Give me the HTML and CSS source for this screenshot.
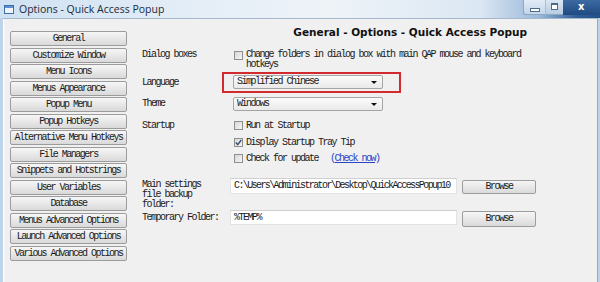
FILE: index.html
```html
<!DOCTYPE html>
<html lang="en">
<head>
  <meta charset="UTF-8">
  <title>Options - Quick Access Popup</title>
  <link rel="stylesheet" href="styles.css">
</head>
<body>
  <div class="window">
    <div class="titlebar">
      <svg class="app-icon" width="10" height="9" viewBox="0 0 10 9">
        <rect x="0.5" y="0.5" width="9" height="8" fill="#eef4fb" stroke="#3d6fa8"/>
        <rect x="1" y="1" width="8" height="2" fill="#5b8fd0"/>
      </svg>
      <span class="title">Options - Quick Access Popup</span>
      <div class="controls">
        <div class="ctl ctl-min"><span class="min-glyph"></span></div>
        <div class="ctl ctl-max"><span class="max-glyph"></span></div>
        <div class="ctl ctl-close">x</div>
      </div>
    </div>

    <div class="client">
      <div class="nav">
        <button class="nav-btn">General</button>
        <button class="nav-btn">Customize Window</button>
        <button class="nav-btn">Menu Icons</button>
        <button class="nav-btn">Menus Appearance</button>
        <button class="nav-btn">Popup Menu</button>
        <button class="nav-btn">Popup Hotkeys</button>
        <button class="nav-btn">Alternative Menu Hotkeys</button>
        <button class="nav-btn">File Managers</button>
        <button class="nav-btn">Snippets and Hotstrings</button>
        <button class="nav-btn">User Variables</button>
        <button class="nav-btn">Database</button>
        <button class="nav-btn">Menus Advanced Options</button>
        <button class="nav-btn">Launch Advanced Options</button>
        <button class="nav-btn">Various Advanced Options</button>
      </div>

      <div class="panel">
        <h1 class="heading">General - Options - Quick Access Popup</h1>

        <div class="row row-dialog">
          <div class="label">Dialog boxes</div>
          <div class="check">
            <span class="box"></span>
            <span class="check-text">Change folders in dialog box with main QAP mouse and keyboard<br>hotkeys</span>
          </div>
        </div>

        <div class="row row-language">
          <div class="label">Language</div>
          <div class="highlight">
            <div class="select"><span>Simplified Chinese</span><span class="arrow"></span></div>
          </div>
        </div>

        <div class="row row-theme">
          <div class="label">Theme</div>
          <div class="select"><span>Windows</span><span class="arrow"></span></div>
        </div>

        <div class="row row-startup">
          <div class="label">Startup</div>
          <div class="checks">
            <div class="check"><span class="box"></span><span class="check-text">Run at Startup</span></div>
            <div class="check">
              <span class="box box-checked">
                <svg width="7" height="7" viewBox="0 0 7 7"><path d="M0.8 3.6 L2.7 5.6 L6.3 1" fill="none" stroke="#3b4f73" stroke-width="1.4"/></svg>
              </span>
              <span class="check-text">Display Startup Tray Tip</span>
            </div>
            <div class="check">
              <span class="box"></span>
              <span class="check-text">Check for update</span>
              <span class="link">(<u>Check now</u>)</span>
            </div>
          </div>
        </div>

        <div class="row row-backup">
          <div class="label label-multi">Main settings<br>file backup<br>folder:</div>
          <div class="field field-backup">C:\Users\Administrator\Desktop\QuickAccessPopup10</div>
          <button class="browse browse-backup">Browse</button>
        </div>

        <div class="row row-temp">
          <div class="label label-temp">Temporary Folder:</div>
          <div class="field field-temp">%TEMP%</div>
          <button class="browse browse-temp">Browse</button>
        </div>
      </div>
    </div>
  </div>
</body>
</html>
```

FILE: styles.css
```css
body {
  margin: 0;
  width: 600px;
  height: 282px;
  overflow: hidden;
  font-family: "Liberation Mono", monospace;
  font-size: 10px;
  letter-spacing: -1.5px;
  color: #1a1a1a;
}

.window {
  height: 282px;
  display: flex;
  flex-direction: column;
  background-color: #bcd3ea;
}

/* title bar */
.titlebar {
  height: 18px;
  flex: none;
  display: flex;
  align-items: center;
  background: linear-gradient(to right, #cfe1f2 0%, #e3edf7 30%, #eef3f8 55%, #dbe7f3 80%, #9ab8d9 90%, #2f5e98 96%, #244f86 100%);
}

.app-icon {
  margin-left: 4px;
  flex: none;
}

.title {
  margin-left: 5px;
  font-family: "Open Sans", sans-serif;
  font-size: 10.5px;
  letter-spacing: 0;
  color: #1c2a3a;
}

.controls {
  margin-left: auto;
  display: flex;
  align-self: flex-start;
  height: 15px;
}

.ctl {
  height: 15px;
  display: flex;
  align-items: center;
  justify-content: center;
  box-sizing: border-box;
}

.ctl-min {
  width: 23px;
  border: 1px solid #8ea7c3;
  border-top: none;
  border-right-color: #a9bdd3;
  border-bottom-left-radius: 3px;
  background: linear-gradient(#e2ecf6, #c3d6ea);
}

.ctl-max {
  width: 17px;
  border-bottom: 1px solid #8ea7c3;
  background: linear-gradient(#dbe7f3, #b7cde4);
}

.ctl-close {
  width: 37px;
  background: linear-gradient(#3d6aa3, #1f4a82);
  color: #ffffff;
  font-family: "DejaVu Sans", sans-serif;
  font-weight: bold;
  font-size: 10px;
  letter-spacing: 0;
  justify-content: flex-start;
  padding-left: 15px;
  padding-bottom: 2px;
}

.min-glyph {
  width: 8px;
  height: 2px;
  margin-top: 6px;
  border: 1px solid #4f6a8b;
  background: #ffffff;
}

.max-glyph {
  width: 5px;
  height: 4px;
  margin-bottom: 2px;
  border: 1px solid #4f6a8b;
  border-top-width: 2px;
  background: #ffffff;
}

/* client area */
.client {
  flex: 1;
  display: flex;
  margin-left: 3px;
  margin-right: 2px;
  background-color: #f0f0f0;
  border-top: 1px solid #a6b8cc;
  border-right: 1px solid #9ea8b3;
  box-shadow: inset 1px 0 0 #ffffff;
}

.nav {
  width: 117px;
  padding: 12px 0 0 7px;
  display: flex;
  flex-direction: column;
  gap: 1.5px;
}

.nav-btn,
.browse {
  height: 15px;
  padding: 0;
  font-family: "Liberation Mono", monospace;
  font-size: 10px;
  letter-spacing: -1.5px;
  color: #1a1a1a;
  border: 1px solid #9c9c9c;
  border-radius: 2px;
  background: linear-gradient(#f6f6f6, #e8e8e8 50%, #d9d9d9);
  line-height: 13px;
  text-align: center;
}

.panel {
  flex: 1;
  padding: 6px 0 0 15px;
}

.heading {
  margin: 0;
  height: 14px;
  line-height: 14px;
  font-family: "DejaVu Sans", sans-serif;
  font-size: 10.5px;
  font-weight: bold;
  letter-spacing: 0;
  color: #111111;
  text-align: right;
  padding-right: 70px;
}

.row {
  display: flex;
  align-items: center;
}

.label {
  width: 91px;
  flex: none;
  line-height: 10px;
}

.row-dialog {
  margin-top: 11px;
  align-items: flex-start;
}

.row-dialog .label,
.row-dialog .check-text {
  line-height: 9.5px;
}

.row-dialog .box {
  margin-top: 1px;
}

.check {
  display: flex;
  align-items: flex-start;
  margin-left: 1px;
}

.box {
  width: 9px;
  height: 9px;
  flex: none;
  box-sizing: border-box;
  border: 1px solid #8e8f8f;
  background: linear-gradient(135deg, #d6d6d6, #f6f6f6);
  margin-right: 3px;
  display: flex;
  align-items: center;
  justify-content: center;
}

.check-text {
  line-height: 11px;
}

.checks {
  display: flex;
  flex-direction: column;
  gap: 5.5px;
}

.checks .check {
  height: 11px;
}

.checks .box {
  margin-top: 1px;
}

.link {
  margin-left: 12px;
  line-height: 11px;
  color: #2a44c4;
}

/* selects */
.row-language {
  margin-top: 3px;
}

.highlight {
  margin-left: -11px;
  padding: 1px 16px 2px 9px;
  border: 2px solid #d32a2f;
}

.select {
  width: 150px;
  height: 14px;
  box-sizing: border-box;
  display: flex;
  align-items: center;
  padding: 0 5px 0 3px;
  border: 1px solid #a5a5a5;
  border-radius: 2px;
  background: linear-gradient(#fbfbfb, #e9e9e9);
  line-height: 12px;
}

.arrow {
  margin-left: auto;
  width: 0;
  height: 0;
  border-left: 3px solid transparent;
  border-right: 3px solid transparent;
  border-top: 3px solid #111111;
}

.row-theme {
  margin-top: 4px;
}

.row-startup {
  margin-top: 9px;
  align-items: flex-start;
}

.row-startup .label {
  line-height: 11px;
}

/* folder fields */
.row-backup {
  margin-top: 13.5px;
  align-items: flex-start;
}

.label-multi {
  padding-top: 2px;
}

.field {
  width: 227px;
  box-sizing: border-box;
  margin-left: -3px;
  padding-left: 3px;
  background: #ffffff;
  border: 1px solid #e2e2e2;
  border-top-color: #cfcfcf;
  white-space: nowrap;
  overflow: hidden;
}

.field-backup {
  height: 16px;
  line-height: 14px;
  letter-spacing: -1.6px;
}

.field-temp {
  height: 15px;
  line-height: 13px;
}

.browse {
  width: 74px;
  margin-left: 5px;
}

.browse-backup {
  margin-top: 2px;
  height: 14px;
  line-height: 12px;
}

.row-temp {
  align-items: flex-start;
}

.label-temp {
  line-height: 15px;
}

.browse-temp {
  margin-top: 1px;
  height: 16px;
}
```
